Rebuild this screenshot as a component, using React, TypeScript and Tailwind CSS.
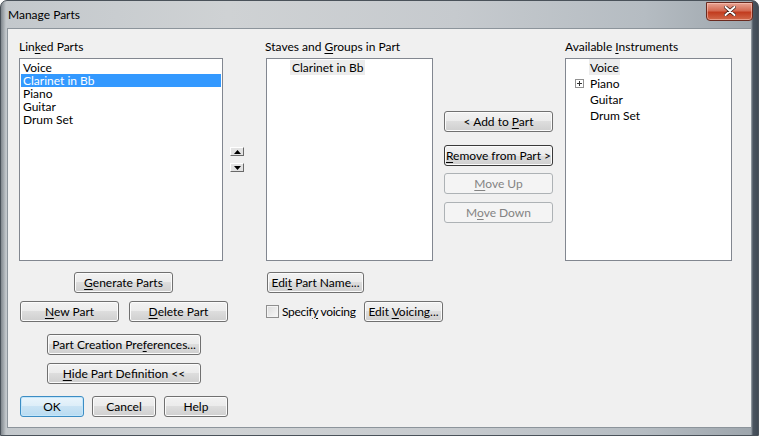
import React from "react";

const font = "font-['Lato','Liberation_Sans',sans-serif] text-[12px] text-black";

type BtnProps = {
  children: React.ReactNode;
  className?: string;
  kind?: "normal" | "default" | "dark" | "disabled";
};

function Btn({ children, className = "", kind = "normal" }: BtnProps) {
  const look =
    kind === "default"
      ? "border-[#3c8dc4] bg-[linear-gradient(to_bottom,#eaf5fc_0%,#dcedf8_50%,#c9e3f4_50%,#b9dbf1_100%)] shadow-[inset_0_0_0_1px_#c4e6fa]"
      : kind === "dark"
      ? "border-[#3a3a3a] bg-[linear-gradient(to_bottom,#f2f2f2_0%,#ebebeb_50%,#dddddd_50%,#cfcfcf_100%)] shadow-[inset_0_0_0_1px_#fbfbfb]"
      : kind === "disabled"
      ? "border-[#adb2b5] bg-[#f4f4f4] text-[#838383]"
      : "border-[#707070] bg-[linear-gradient(to_bottom,#f2f2f2_0%,#ebebeb_50%,#dddddd_50%,#cfcfcf_100%)] shadow-[inset_0_0_0_1px_#fbfbfb]";
  return (
    <div
      className={`flex h-[21px] items-center justify-center rounded-[3px] border leading-none ${look} ${className}`}
    >
      <span className={kind === "disabled" ? "text-[#838383]" : ""}>{children}</span>
    </div>
  );
}

function U({ children }: { children: React.ReactNode }) {
  return <span className="underline underline-offset-2">{children}</span>;
}

function Arrow({ up }: { up?: boolean }) {
  return (
    <div className="flex h-[9px] w-[14px] items-center justify-center border border-t-white border-l-white border-r-[#696969] border-b-[#696969] bg-[#e3e3e3]">
      <svg width="7" height="4" viewBox="0 0 7 4">
        {up ? <polygon points="3.5,0 7,4 0,4" fill="#000" /> : <polygon points="0,0 7,0 3.5,4" fill="#000" />}
      </svg>
    </div>
  );
}

export default function App() {
  const linked = ["Voice", "Clarinet in Bb", "Piano", "Guitar", "Drum Set"];
  const avail = ["Voice", "Piano", "Guitar", "Drum Set"];
  return (
    <div className={`w-[759px] h-[436px] overflow-hidden ${font}`}>
      <div className="flex h-full w-full flex-col rounded-t-[7px] border border-[#4a525a] bg-[linear-gradient(to_right,#80878d_0px,#c3c8cc_5px,#cfd2d4_30%,#c6cace_60%,#b5bcc2_85%,#9ea6ad_750px,#4b5560_752px,#3d4650_759px)]">
        {/* title bar */}
        <div className="flex h-[27px] shrink-0 items-center justify-between pl-[7px] pr-[5px]">
          <span className="text-[12px] leading-none">Manage Parts</span>
          <div className="mt-[-7px] flex h-[19px] w-[47px] items-center justify-center rounded-b-[4px] border border-[#6a2a1f] bg-[linear-gradient(to_bottom,#e8a493_0%,#d46a52_45%,#c23c1f_55%,#d2694a_100%)] shadow-[inset_0_0_0_1px_rgba(255,210,200,0.5)]">
            <svg width="12" height="10" viewBox="0 0 12 10">
              <path d="M1.5 1 L10.5 9 M10.5 1 L1.5 9" stroke="#3a1a14" strokeWidth="3.4" strokeLinecap="round" />
              <path d="M1.5 1 L10.5 9 M10.5 1 L1.5 9" stroke="#fff" strokeWidth="2" strokeLinecap="round" />
            </svg>
          </div>
        </div>

        {/* client area */}
        <div className="ml-[6px] mb-[7px] h-[400px] w-[745px] border border-[#8c949b] bg-[#f0f0f0]">
          <div className="flex pt-[10px]">
            {/* column A */}
            <div className="ml-[11px] flex w-[209px] flex-col">
              <div className="h-[15px] leading-[15px]">
                Lin<U>k</U>ed Parts
              </div>
              <div className="mt-[4px] h-[203px] w-[204px] border border-[#828790] bg-white px-[1px] pt-[2px]">
                {linked.map((n, i) => (
                  <div
                    key={n}
                    className={`h-[13px] pl-[2px] leading-[13px] ${i === 1 ? "bg-[#3399ff] text-white" : ""}`}
                  >
                    {n}
                  </div>
                ))}
              </div>
              <Btn className="mx-auto mt-[11px] w-[99px]">
                <U>G</U>enerate Parts
              </Btn>
              <div className="ml-[1px] mt-[8px] flex w-[208px] justify-between">
                <Btn className="w-[99px]">
                  <U>N</U>ew Part
                </Btn>
                <Btn className="w-[99px]">
                  <U>D</U>elete Part
                </Btn>
              </div>
              <Btn className="ml-[28px] mt-[12px] w-[154px]">
                Part Creation Pre<U>f</U>erences...
              </Btn>
              <Btn className="ml-[28px] mt-[8px] w-[154px]">
                <U>H</U>ide Part Definition &lt;&lt;
              </Btn>
              <div className="ml-[1px] mt-[12px] flex w-[208px] gap-[8px]">
                <Btn kind="default" className="w-[64px]">
                  OK
                </Btn>
                <Btn className="w-[64px]">Cancel</Btn>
                <Btn className="w-[64px]">Help</Btn>
              </div>
            </div>

            {/* column B: reorder arrows */}
            <div className="ml-[2px] flex w-[14px] flex-col pt-[108px]">
              <Arrow up />
              <div className="mt-[7px]">
                <Arrow />
              </div>
            </div>

            {/* column C */}
            <div className="ml-[21px] flex w-[178px] flex-col">
              <div className="h-[15px] leading-[15px]">
                Staves and <U>G</U>roups in Part
              </div>
              <div className="mt-[4px] ml-[1px] h-[203px] w-[167px] border border-[#828790] bg-white pt-[1px]">
                <div className="ml-[23px] h-[15px] w-fit bg-[#ececec] px-[2px] leading-[16px]">Clarinet in Bb</div>
              </div>
              <Btn className="ml-[2px] mt-[11px] w-[97px]">
                Edi<U>t</U> Part Name...
              </Btn>
              <div className="mt-[8px] flex items-center">
                <div className="ml-[1px] h-[13px] w-[13px] border border-[#8f8f8f] bg-[linear-gradient(135deg,#dcdcdc,#f8f8f8)] shadow-[inset_0_0_0_1px_#f4f4f4]" />
                <span className="ml-[3px] tracking-[-0.3px]">
                  Specif<U>y</U> voicing
                </span>
                <Btn className="ml-auto w-[79px]">
                  Edit <U>V</U>oicing...
                </Btn>
              </div>
            </div>

            {/* column D */}
            <div className="ml-[1px] flex w-[109px] flex-col pt-[72px]">
              <Btn>
                &lt; Add to <U>P</U>art
              </Btn>
              <Btn kind="dark" className="mt-[13px]">
                <U>R</U>emove from Part &gt;
              </Btn>
              <Btn kind="disabled" className="mt-[7px]">
                <U>M</U>ove Up
              </Btn>
              <Btn kind="disabled" className="mt-[8px]">
                M<U>o</U>ve Down
              </Btn>
            </div>

            {/* column E */}
            <div className="ml-[12px] flex w-[167px] flex-col">
              <div className="h-[15px] leading-[15px]">
                Available <U>I</U>nstruments
              </div>
              <div className="mt-[4px] h-[203px] w-[167px] border border-[#828790] bg-white">
                {avail.map((n, i) => (
                  <div key={n} className="flex h-[16px] items-center">
                    <div className="flex w-[23px] justify-end pr-[5px]">
                      {n === "Piano" && (
                        <div className="relative h-[9px] w-[9px] border border-[#919191] bg-white">
                          <div className="absolute left-[1px] top-[3px] h-[1px] w-[5px] bg-[#333]" />
                          <div className="absolute left-[3px] top-[1px] h-[5px] w-[1px] bg-[#333]" />
                        </div>
                      )}
                    </div>
                    <span className={`h-[16px] px-[1px] leading-[17px] ${i === 0 ? "bg-[#ececec]" : ""}`}>{n}</span>
                  </div>
                ))}
              </div>
            </div>
          </div>
        </div>
      </div>
    </div>
  );
}
